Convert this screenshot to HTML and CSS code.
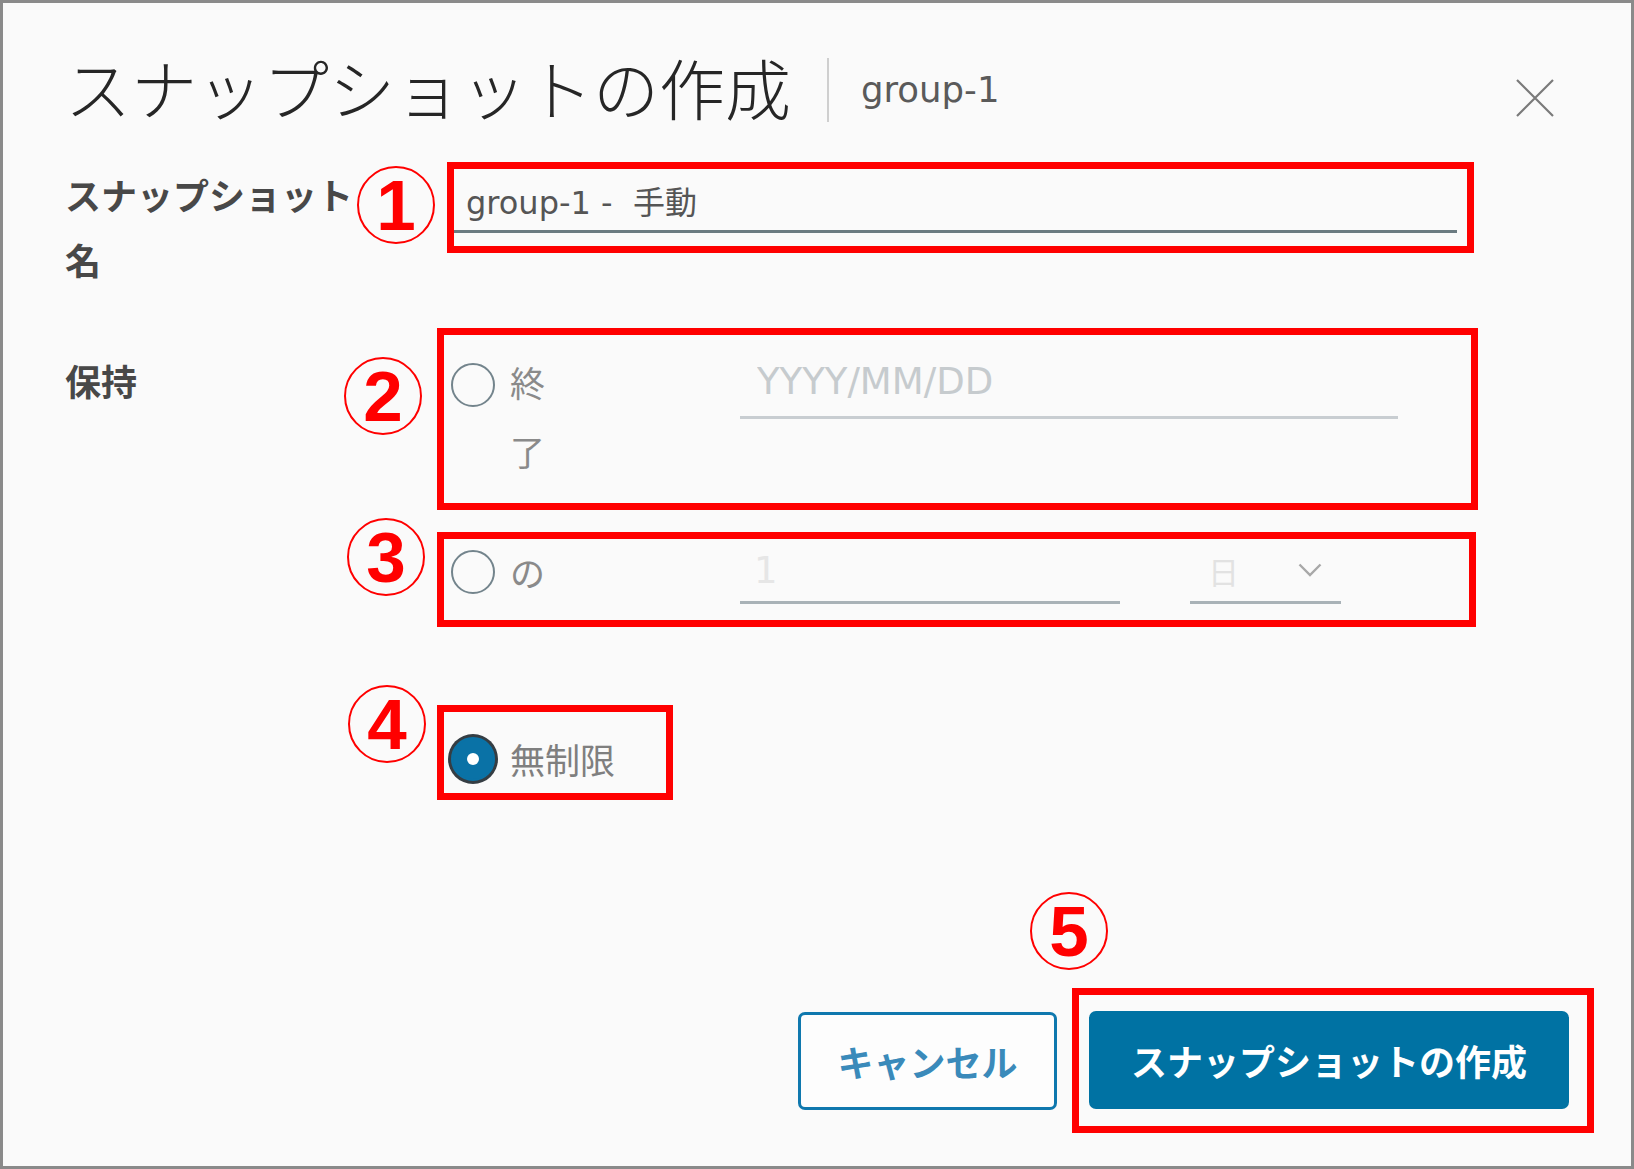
FILE: index.html
```html
<!DOCTYPE html>
<html lang="ja">
<head>
<meta charset="utf-8">
<title>スナップショットの作成</title>
<link rel="stylesheet" href="styles.css">
</head>
<body>
<div class="dialog">
  <header class="dialog-header">
    <h1 class="dialog-title">スナップショットの作成</h1>
    <span class="header-divider"></span>
    <span class="dialog-subtitle">group-1</span>
    <button class="close-btn" type="button" aria-label="閉じる">
      <svg viewBox="0 0 40 40" width="40" height="40"><path d="M2 2 L38 38 M38 2 L2 38" stroke="#7a7a7a" stroke-width="2.2" fill="none"/></svg>
    </button>
  </header>

  <form class="dialog-body">
    <div class="field">
      <label class="field-label">スナップショット名</label>
      <div class="callout callout-name">
        <span class="marker marker-1">1</span>
        <input class="text-input name-input" type="text" value="group-1 -  手動">
      </div>
    </div>

    <div class="field field-retention">
      <label class="field-label retention-label">保持</label>
      <div class="options">
        <div class="callout callout-until">
          <span class="marker marker-2">2</span>
          <div class="option option-until">
            <span class="radio"></span>
            <span class="option-label wrap-label">終了</span>
            <input class="text-input date-input" type="text" placeholder="YYYY/MM/DD">
          </div>
        </div>

        <div class="callout callout-for">
          <span class="marker marker-3">3</span>
          <div class="option option-for">
            <span class="radio"></span>
            <span class="option-label wrap-label">の</span>
            <div class="for-fields">
              <input class="text-input number-input" type="text" placeholder="1">
              <div class="select">
                <span class="select-value">日</span>
                <svg class="chevron" viewBox="0 0 24 14" width="24" height="14"><polyline points="1.5,1.5 12,12 22.5,1.5" fill="none" stroke="#a8a8a8" stroke-width="2.4"/></svg>
              </div>
            </div>
          </div>
        </div>

        <div class="callout callout-unlimited">
          <span class="marker marker-4">4</span>
          <div class="option option-unlimited">
            <span class="radio radio-checked"></span>
            <span class="option-label">無制限</span>
          </div>
        </div>
      </div>
    </div>
  </form>

  <footer class="dialog-footer">
    <button class="btn btn-outline" type="button">キャンセル</button>
    <div class="callout callout-submit">
      <span class="marker marker-5">5</span>
      <button class="btn btn-primary" type="button">スナップショットの作成</button>
    </div>
  </footer>
</div>
</body>
</html>
```

FILE: styles.css
```css
* {
  box-sizing: border-box;
}

html,
body {
  margin: 0;
  padding: 0;
}

body {
  background: #fafafa;
  font-family: "DejaVu Sans", "Noto Sans CJK JP", sans-serif;
}

.dialog {
  width: 1634px;
  height: 1169px;
  border: 3px solid #8a8a8a;
  background: #fafafa;
  padding: 43px 37px 33px 62px;
  display: flex;
  flex-direction: column;
}

/* Header */
.dialog-header {
  display: flex;
  align-items: center;
  height: 80px;
}

.dialog-title {
  margin: 0;
  font-family: "Noto Sans CJK JP", sans-serif;
  font-size: 66px;
  font-weight: 300;
  line-height: 80px;
  color: #262626;
  white-space: nowrap;
}

.header-divider {
  width: 2px;
  height: 64px;
  background: #cfcfcf;
  margin-left: 36px;
  margin-top: 8px;
}

.dialog-subtitle {
  font-size: 35.5px;
  line-height: 35.5px;
  color: #5a5a5a;
  margin-left: 32px;
  margin-top: 7px;
}

.close-btn {
  margin-left: auto;
  margin-right: 39px;
  margin-top: 24px;
  width: 40px;
  height: 40px;
  padding: 0;
  border: 0;
  background: none;
  display: flex;
}

/* Body */
.dialog-body {
  margin: 36px 0 0;
  display: flex;
  flex-direction: column;
}

.field {
  display: grid;
  grid-template-columns: 372px 1fr;
  align-items: start;
}

.field-label {
  font-family: "Noto Sans CJK JP", sans-serif;
  font-weight: 700;
  font-size: 36px;
  line-height: 65px;
  color: #484848;
  width: 300px;
}

.callout {
  position: relative;
  border: 7px solid #ff0000;
}

.marker {
  position: absolute;
  width: 78px;
  height: 78px;
  border: 2px solid #ff0000;
  border-radius: 50%;
  display: flex;
  align-items: center;
  justify-content: center;
  font-family: "Liberation Sans", Arial, sans-serif;
  font-weight: 700;
  font-size: 71px;
  line-height: 1;
  color: #ff0000;
}

.marker-1 { left: -97px; top: -3px; }
.marker-2 { left: -100px; top: 22px; }
.marker-3 { left: -97px; top: -21px; }
.marker-4 { left: -96px; top: -27px; }
.marker-5 { left: -49px; top: -103px; }

.text-input {
  display: block;
  width: 100%;
  margin: 0;
  border: 0;
  border-bottom: 3px solid #a9b2b7;
  border-radius: 0;
  background: transparent;
  font-family: "DejaVu Sans", "Noto Sans CJK JP", sans-serif;
  outline: none;
}

.callout-name {
  margin-left: 10px;
  width: 1027px;
  padding: 0 10px 13px 0;
}

.name-input {
  height: 64px;
  padding: 0 0 0 12px;
  font-size: 32px;
  color: #555555;
  border-bottom-color: #6b7b81;
}

.field-retention {
  margin-top: 36px;
}

.retention-label {
  margin-top: 20px;
}

.options {
  display: flex;
  flex-direction: column;
  align-items: flex-start;
}

.option {
  display: grid;
  grid-template-columns: 59px 230px 1fr;
  align-items: start;
}

.radio {
  display: block;
  width: 44px;
  height: 44px;
  border-radius: 50%;
  border: 2.5px solid #73848c;
  background: #fafafa;
}

.option-label {
  font-family: "Noto Sans CJK JP", sans-serif;
  font-size: 35px;
  line-height: 69px;
  color: #8a8a8a;
  white-space: nowrap;
}

.wrap-label {
  width: 36px;
  white-space: normal;
}

/* Row: end date */
.callout-until {
  width: 1041px;
  padding: 12px 0 18px 7px;
}

.option-until .radio {
  margin-top: 16px;
}

.date-input {
  width: 658px;
  height: 72px;
  padding-left: 17px;
  font-size: 37px;
  color: #555555;
  border-bottom-color: #c8cdd1;
}

.date-input::placeholder {
  color: #c6cbce;
  opacity: 1;
}

/* Row: for N days */
.callout-for {
  margin-top: 22px;
  width: 1039px;
  padding: 0 0 16px 7px;
}

.option-for {
  align-items: center;
}

.option-for .option-label {
  line-height: 65px;
}

.for-fields {
  display: flex;
  align-items: flex-end;
}

.number-input {
  width: 380px;
  height: 65px;
  padding-left: 14px;
  font-size: 37px;
  color: #555555;
}

.number-input::placeholder {
  color: #e6e6e6;
  opacity: 1;
}

.select {
  width: 151px;
  height: 65px;
  margin-left: 70px;
  border-bottom: 3px solid #a9b2b7;
  display: flex;
  align-items: center;
  padding-left: 18px;
}

.select-value {
  font-family: "Noto Sans CJK JP", sans-serif;
  font-size: 31px;
  color: #e2e2e2;
  width: 31px;
}

.chevron {
  margin-left: 59px;
}

/* Row: unlimited */
.callout-unlimited {
  margin-top: 78px;
  width: 236px;
  padding: 12px 0 0 7px;
}

.option-unlimited {
  grid-template-columns: 59px auto;
  align-items: center;
}

.option-unlimited .option-label {
  color: #7f7f7f;
}

.radio-checked {
  position: relative;
  background: #0a72a6;
  border: 2px solid #0a72a6;
  box-shadow: 0 0 0 3px #353d43;
}

.radio-checked::after {
  content: "";
  position: absolute;
  left: 50%;
  top: 50%;
  width: 12px;
  height: 12px;
  margin: -6px 0 0 -6px;
  border-radius: 50%;
  background: #ffffff;
}

/* Footer */
.dialog-footer {
  margin-top: auto;
  display: flex;
  justify-content: flex-end;
  align-items: center;
}

.btn {
  font-family: "Noto Sans CJK JP", sans-serif;
  font-size: 36px;
  font-weight: 700;
  height: 98px;
  border-radius: 7px;
  padding: 0;
  cursor: pointer;
}

.btn-outline {
  width: 259px;
  margin-right: 15px;
  border: 3px solid #0f78ae;
  background: #fdfdfd;
  color: #3a8aba;
}

.callout-submit {
  width: 522px;
  height: 145px;
  padding: 16px 18px 17px 10px;
}

.btn-primary {
  width: 480px;
  border: 0;
  background: #0072a3;
  color: #ffffff;
}
```
